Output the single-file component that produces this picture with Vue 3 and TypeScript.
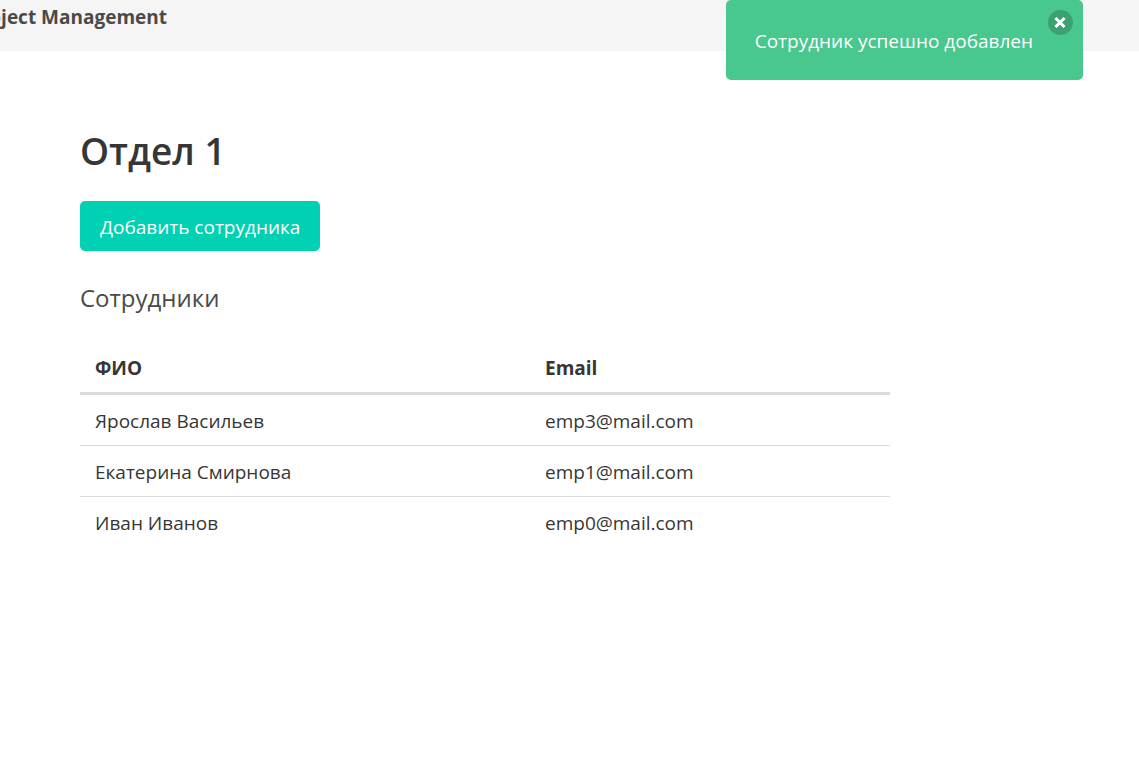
<script setup lang="ts">
import { ref } from 'vue'

interface Employee {
  name: string
  email: string
}

const employees: Employee[] = [
  { name: 'Ярослав Васильев', email: 'emp3@mail.com' },
  { name: 'Екатерина Смирнова', email: 'emp1@mail.com' },
  { name: 'Иван Иванов', email: 'emp0@mail.com' },
]

const notice = ref(true)
</script>

<template>
  <div class="page">
    <header class="topbar">
      <div class="brand">Project Management</div>
    </header>

    <div v-if="notice" class="notification" role="status">
      <span>Сотрудник успешно добавлен</span>
      <button class="close" type="button" aria-label="Закрыть" @click="notice = false">
        <svg viewBox="0 0 25 25" aria-hidden="true">
          <path d="M7.5 8 L16.5 17 M16.5 8 L7.5 17" />
        </svg>
      </button>
    </div>

    <main class="content">
      <h1>Отдел 1</h1>
      <button class="add" type="button">Добавить сотрудника</button>
      <h2>Сотрудники</h2>
      <table>
        <thead>
          <tr>
            <th scope="col">ФИО</th>
            <th scope="col">Email</th>
          </tr>
        </thead>
        <tbody>
          <tr v-for="employee in employees" :key="employee.email">
            <td>{{ employee.name }}</td>
            <td>{{ employee.email }}</td>
          </tr>
        </tbody>
      </table>
    </main>
  </div>
</template>

<style>
body {
  background: #fff;
}
</style>

<style scoped>
.page {
  position: relative;
  overflow: hidden;
  color: #363636;
  font-family: "Segoe UI", "Open Sans", "Noto Sans", sans-serif;
  font-size: 19px;
  line-height: 30px;
}

.topbar {
  padding: 2px 0 19px;
  background: #f5f5f5;
}

.brand {
  display: flex;
  justify-content: flex-end;
  width: 167px;
  color: #4a4a4a;
  font-weight: 700;
  white-space: nowrap;
}

.notification {
  position: absolute;
  top: 0;
  right: 56px;
  padding: 26px 50px 24px 29px;
  border-radius: 5px;
  background: #48c78e;
  color: #fff;
}

.close {
  position: absolute;
  top: 10px;
  right: 10px;
  width: 25px;
  height: 25px;
  padding: 0;
  border: 0;
  border-radius: 50%;
  background: rgba(10, 10, 10, 0.2);
  cursor: pointer;
}

.close svg {
  display: block;
  fill: none;
  stroke: #fff;
  stroke-width: 3;
}

.content {
  margin: 75px 249px 0 80px;
}

h1 {
  margin: 0 0 25px;
  font-size: 37px;
  font-weight: 600;
  line-height: 50px;
}

.add {
  display: block;
  height: 50px;
  padding: 1px 20px 0;
  border: 0;
  border-radius: 5px;
  background: #00d1b2;
  color: #fff;
  font: inherit;
  cursor: pointer;
}

h2 {
  margin: 31px 0 28px;
  color: #4a4a4a;
  font-size: 24px;
  font-weight: 400;
  line-height: 32px;
}

table {
  width: 100%;
  border-collapse: collapse;
  table-layout: fixed;
}

th,
td {
  padding: 11px 15px 9px;
  border-bottom: 1px solid #dbdbdb;
  text-align: left;
}

th {
  border-bottom-width: 3px;
  font-weight: 700;
}

th:first-child {
  width: 420px;
}

tbody tr:last-child td {
  border-bottom: 0;
}
</style>
